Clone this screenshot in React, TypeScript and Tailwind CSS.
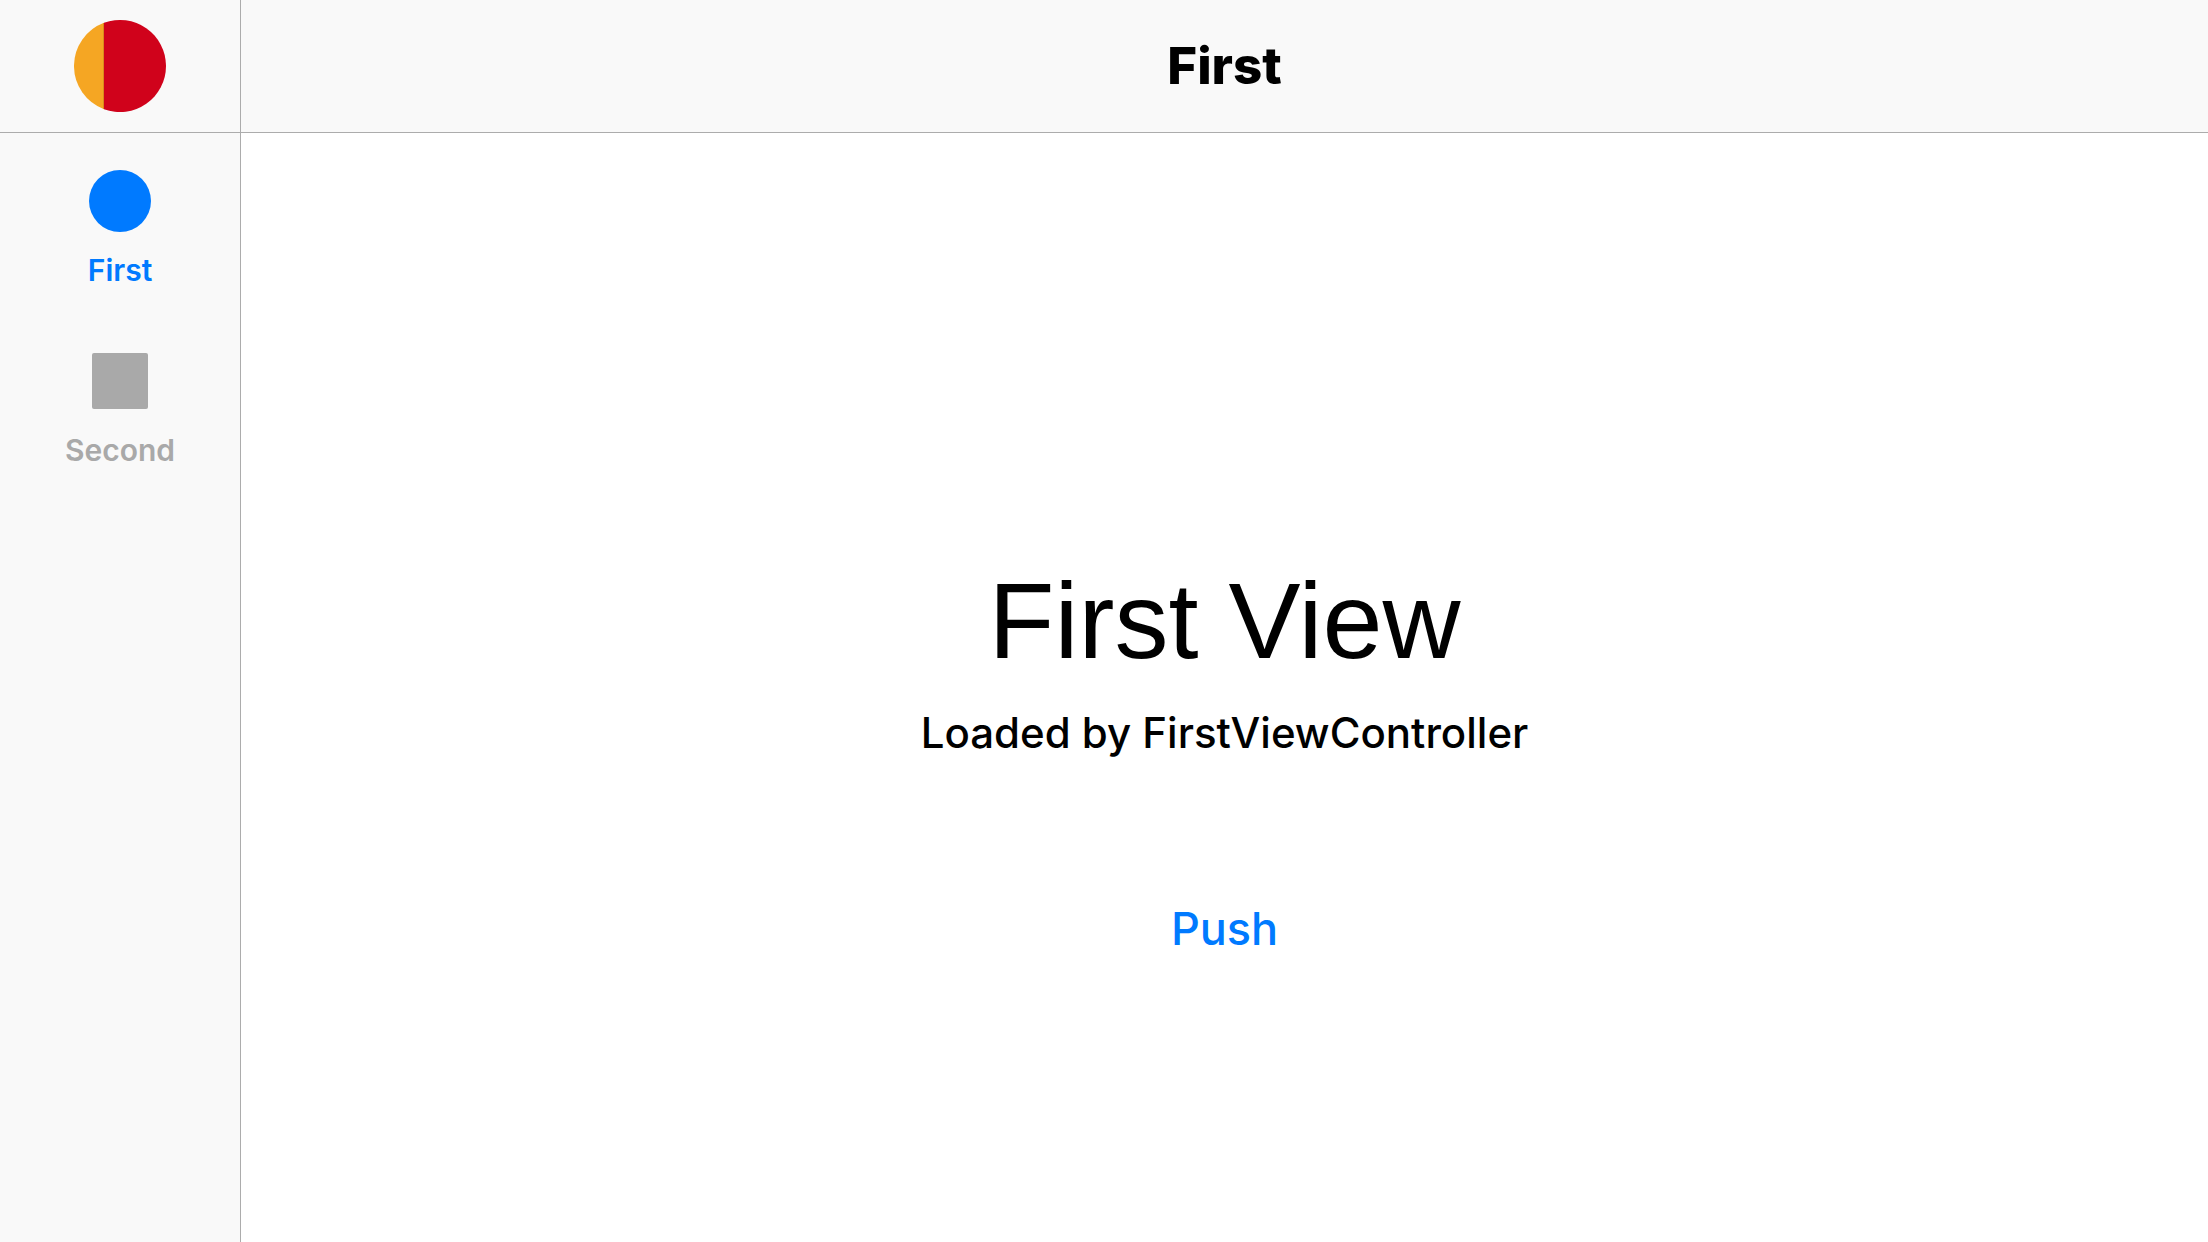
export default function App() {
  return (
    <div className="flex h-screen bg-white font-['Inter',sans-serif] text-black">
      <aside className="flex w-[241px] shrink-0 flex-col border-r border-[#acacac] bg-[#f9f9f9]">
        <div className="flex h-[133px] items-center justify-center border-b border-[#acacac]">
          <svg className="size-[92px]" viewBox="0 0 92 92" aria-hidden="true">
            <path d="M30 2.87A46 46 0 0 0 30 89.13Z" fill="#f5a623" />
            <path d="M30 2.87A46 46 0 1 1 30 89.13Z" fill="#d0021b" />
            <rect x="29" y="3" width="1" height="86" fill="#d98a1d" />
          </svg>
        </div>
        <nav className="flex flex-col">
          <button className="flex h-[180px] flex-col items-center pt-[37px] text-[#007aff]">
            <span className="size-[62px] rounded-full bg-current" />
            <span className="mt-5 text-[30px] leading-9 font-semibold">First</span>
          </button>
          <button className="flex h-[180px] flex-col items-center pt-[40px] text-[#a9a9a9]">
            <span className="size-14 rounded-[2px] bg-current" />
            <span className="mt-[23px] text-[30px] leading-9 font-semibold">Second</span>
          </button>
        </nav>
      </aside>
      <div className="flex min-w-0 flex-1 flex-col">
        <header className="flex h-[133px] shrink-0 items-center justify-center border-b border-[#acacac] bg-[#f9f9f9]">
          <h1 className="text-[51px] leading-[60px] font-extrabold">First</h1>
        </header>
        <main className="flex flex-1 flex-col items-center justify-center pt-[142px]">
          <h2 className="font-['Liberation_Sans',sans-serif] text-[108px] leading-[120px]">First View</h2>
          <p className="mt-7 text-[42px] leading-[48px] font-medium">Loaded by FirstViewController</p>
          <button className="mt-36 text-[45px] leading-[56px] font-medium text-[#007aff]">Push</button>
        </main>
      </div>
    </div>
  );
}
